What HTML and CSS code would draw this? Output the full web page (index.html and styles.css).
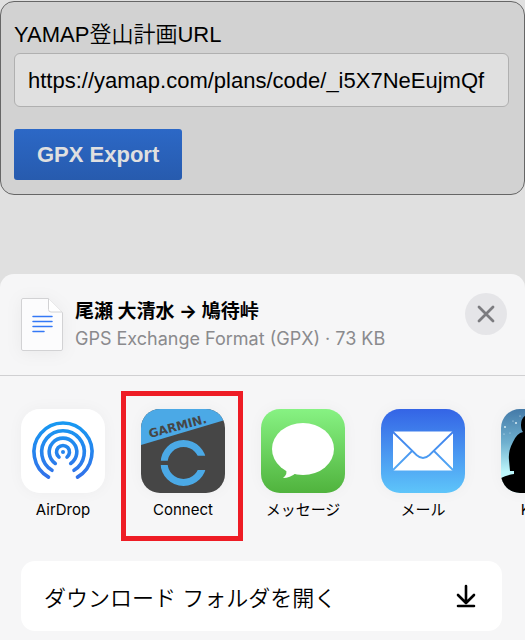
FILE: index.html
```html
<!DOCTYPE html>
<html lang="ja">
<head>
<meta charset="utf-8">
<meta name="viewport" content="width=device-width, initial-scale=1">
<title>GPX Export</title>
<link rel="stylesheet" href="styles.css">
</head>
<body>
<form class="panel">
  <label class="panel-label" for="plan-url">YAMAP登山計画URL</label>
  <input class="panel-input" id="plan-url" type="text" value="https://yamap.com/plans/code/_i5X7NeEujmQf">
  <button class="panel-button" type="button">GPX Export</button>
</form>

<section class="sheet">
  <header class="sheet-header">
    <svg class="file-icon" viewBox="0 0 42 53" aria-hidden="true">
      <path d="M2 .5H27.500L41.500 14.500V51Q41.500 52.500 40 52.500H2Q.5 52.500 .5 51V2Q.5 .5 2 .5Z" fill="#fcfcfd" stroke="#d2d2d4"/>
      <path d="M27.500 .5V11.500Q27.500 14 30 14H41" fill="#fff" stroke="#d2d2d4"/>
      <path d="M12 18.500H31M12 23.500H31M12 28.500H31M12 33.500H23" stroke="#3478f6" stroke-width="1.500" stroke-linecap="round"/>
    </svg>
    <div class="file-info">
      <h1 class="file-title">尾瀬 大清水 → 鳩待峠</h1>
      <p class="file-meta">GPS Exchange Format (GPX) · 73 KB</p>
    </div>
    <button class="close" type="button" aria-label="閉じる">
      <svg class="close-icon" viewBox="0 0 18 18" aria-hidden="true"><path d="M2 2L16 16M16 2L2 16" stroke="#7c7c80" stroke-width="2.800" stroke-linecap="round"/></svg>
    </button>
  </header>

  <div class="apps">
    <button class="app" type="button">
      <svg class="app-icon" viewBox="0 0 84 84" aria-hidden="true">
        <defs><linearGradient id="air" gradientUnits="userSpaceOnUse" x1="0" y1="12" x2="0" y2="72"><stop offset="0" stop-color="#179af2"/><stop offset="1" stop-color="#336fe9"/></linearGradient></defs>
        <rect width="84" height="84" fill="#fff"/>
        <g fill="none" stroke="url(#air)" stroke-width="3.600" stroke-linecap="round">
          <path d="M27.500 68.100A29 29 0 1 1 56.500 68.100"/>
          <path d="M31 61.300A21.300 21.300 0 1 1 53 61.300"/>
          <path d="M34.300 54.400A13.800 13.800 0 1 1 49.700 54.400"/>
          <path d="M38 48.100A6.500 6.500 0 1 1 46 48.100"/>
        </g>
        <circle cx="42" cy="43" r="2" fill="#2585ee"/>
      </svg>
      <span class="app-name">AirDrop</span>
    </button>

    <button class="app app-marked" type="button">
      <svg class="app-icon" viewBox="0 0 84 84" aria-hidden="true">
        <defs><clipPath id="ring"><path d="M0 0H84V46.700H42V51.700H0ZM0 56H42V61H84V84H0Z"/></clipPath></defs>
        <rect width="84" height="84" fill="#464646"/>
        <path d="M0 0H84V11L0 36Z" fill="#4ba9e6"/>
        <text class="brand" x="9" y="29" transform="rotate(-15 9 29)">GARMIN.</text>
        <circle cx="42.500" cy="54" r="19.400" fill="none" stroke="#4ba9e6" stroke-width="7" clip-path="url(#ring)"/>
      </svg>
      <span class="app-name">Connect</span>
    </button>

    <button class="app" type="button">
      <svg class="app-icon" viewBox="0 0 84 84" aria-hidden="true">
        <defs><linearGradient id="msg" x1="0" y1="0" x2="0" y2="1"><stop offset="0" stop-color="#87f283"/><stop offset="1" stop-color="#50b33d"/></linearGradient></defs>
        <rect width="84" height="84" fill="url(#msg)"/>
        <ellipse cx="42" cy="40" rx="31" ry="26" fill="#fff"/>
        <path d="M25 60Q27 65 22 69Q29 69 35 64Z" fill="#fff"/>
      </svg>
      <span class="app-name">メッセージ</span>
    </button>

    <button class="app" type="button">
      <svg class="app-icon" viewBox="0 0 84 84" aria-hidden="true">
        <defs><linearGradient id="mail" gradientUnits="userSpaceOnUse" x1="0" y1="0" x2="0" y2="84"><stop offset="0" stop-color="#3464e6"/><stop offset="1" stop-color="#5ec5fa"/></linearGradient></defs>
        <rect width="84" height="84" fill="url(#mail)"/>
        <rect x="12" y="22.500" width="60" height="39" rx="1.500" fill="#fff"/>
        <path d="M12 23L35.500 46Q42 52 48.500 46L72 23M31 42L12 61M53 42L72 61" fill="none" stroke="url(#mail)" stroke-width="1.800"/>
      </svg>
      <span class="app-name">メール</span>
    </button>

    <button class="app" type="button">
      <svg class="app-icon" viewBox="0 0 84 84" aria-hidden="true">
        <defs><linearGradient id="sky" x1="0" y1="0" x2="0" y2="1"><stop offset="0" stop-color="#447aa8"/><stop offset=".4" stop-color="#6fb0cf"/><stop offset=".75" stop-color="#bdf6fb"/></linearGradient></defs>
        <rect width="84" height="84" fill="url(#sky)"/>
        <g fill="#d8ecf5"><circle cx="4" cy="18" r="1"/><circle cx="15" cy="14" r="1"/><circle cx="12" cy="12" r=".6"/><circle cx="3" cy="25" r=".6"/><circle cx="9" cy="24" r=".5"/><circle cx="19" cy="7" r=".6"/></g>
        <path d="M84 5H27Q20 8 20 16Q20 21 22 23Q16 24 12 33Q7 42 8 51L9 62L13 62V65Q5 66 0 69V84H84Z" fill="#000"/>
      </svg>
      <span class="app-name">Kindle</span>
    </button>
  </div>

  <div class="actions">
    <button class="action" type="button">
      <span>ダウンロード フォルダを開く</span>
      <svg class="action-icon" viewBox="0 0 20 24" aria-hidden="true"><path d="M10 2V19M2 11L10 19L18 11M2 22H18" fill="none" stroke="#000" stroke-width="2.600" stroke-linecap="round" stroke-linejoin="round"/></svg>
    </button>
  </div>
</section>
</body>
</html>
```
FILE: styles.css
```css
* {
  box-sizing: border-box;
}

body {
  display: flex;
  flex-direction: column;
  gap: 79px;
  min-height: 100vh;
  margin: 0;
  padding-top: 1px;
  overflow-x: hidden;
  background: #e0e0e0;
  color: #000;
  font-family: Inter, "Noto Sans CJK JP", sans-serif;
}

button {
  margin: 0;
  padding: 0;
  border: 0;
  background: none;
  color: inherit;
  font: inherit;
}

.panel {
  display: flex;
  flex-direction: column;
  align-items: flex-start;
  padding: 17px 15px 14px 13px;
  border: 1px solid #666;
  border-radius: 14px;
  background: #d2d2d2;
  font-family: "Liberation Sans", "Noto Sans CJK JP", sans-serif;
  font-size: 22px;
}

.panel-label {
  margin-bottom: 2px;
  font-weight: 350;
  line-height: 32px;
}

.panel-input {
  width: 100%;
  height: 54px;
  margin-bottom: 22px;
  padding: 2px 13px 0;
  border: 1px solid #b0b0b0;
  border-radius: 6px;
  background: #e0e0e0;
  color: #000;
  font: inherit;
}

.panel-button {
  height: 51px;
  padding: 0 23px;
  border-radius: 3px;
  background: linear-gradient(#2c68c6, #275bae);
  color: #e0e0e0;
  font-weight: 700;
}

.sheet {
  flex: 1;
  padding-bottom: 9px;
  border-radius: 14px 14px 0 0;
  background: #f6f6f7;
}

.sheet-header {
  display: flex;
  align-items: flex-start;
  height: 102px;
  padding: 19px 18px 0 21px;
  border-bottom: 1px solid #d0d0d2;
}

.file-icon {
  width: 42px;
  height: 53px;
  margin-top: 5px;
  filter: drop-shadow(0 2px 8px #0000000d);
}

.file-info {
  flex: 1;
  margin: 5px 0 0 12px;
}

.file-title {
  margin: 0;
  font-size: 19px;
  font-weight: 700;
  line-height: 27px;
}

.file-meta {
  margin: 0;
  color: #8a8a8d;
  font-size: 18px;
  line-height: 27px;
}

.close {
  display: grid;
  place-items: center;
  width: 42px;
  height: 42px;
  border-radius: 50%;
  background: #e5e5e8;
}

.close-icon {
  width: 18px;
  height: 18px;
}

.apps {
  display: flex;
  gap: 36px;
  padding: 33px 0 41px 21px;
  overflow: hidden;
}

.app {
  position: relative;
  display: flex;
  flex: none;
  flex-direction: column;
  align-items: center;
  gap: 7px;
  width: 84px;
}

.app-marked::after {
  content: "";
  position: absolute;
  inset: -18px -18px -21px -20px;
  border: 5px solid #ee1c25;
}

.app-icon {
  width: 84px;
  height: 84px;
  border-radius: 19px;
  box-shadow: 0 0 16px #0000000a;
}

.brand {
  fill: #464646;
  font-family: "DejaVu Sans", sans-serif;
  font-size: 12px;
  font-weight: 700;
}

.app-name {
  font-size: 15px;
  line-height: 20px;
  white-space: nowrap;
}

.actions {
  padding: 0 23px 0 21px;
}

.action {
  display: flex;
  align-items: center;
  justify-content: space-between;
  width: 100%;
  height: 70px;
  padding: 0 26px 0 23px;
  border-radius: 14px;
  background: #fff;
  font-size: 22px;
  font-weight: 350;
}

.action-icon {
  width: 20px;
  height: 24px;
}
```
